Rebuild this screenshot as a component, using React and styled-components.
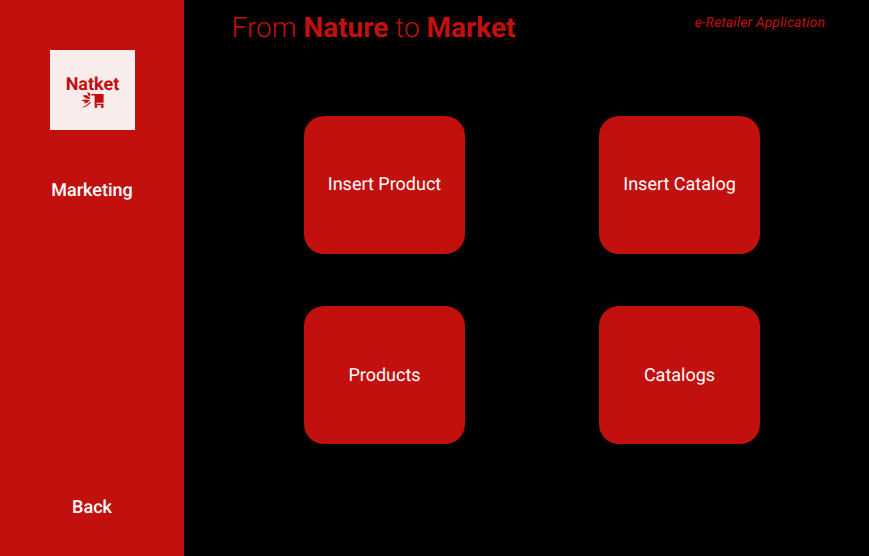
import React from "react";
import styled, { createGlobalStyle } from "styled-components";

const Global = createGlobalStyle`
  html, body { margin: 0; padding: 0; background: #000; }
  body { font-family: Roboto, "Liberation Sans", sans-serif; text-rendering: geometricPrecision; }
`;
const RED = "#c1100e";

const Page = styled.div`
  width: 869px;
  height: 556px;
  display: flex;
  background: #000;
  overflow: hidden;
`;
const Sidebar = styled.aside`
  width: 184px;
  flex: none;
  background: ${RED};
  display: flex;
  flex-direction: column;
  align-items: center;
  padding: 50px 0 38px;
  box-sizing: border-box;
`;
const Logo = styled.div`
  width: 85px;
  height: 80px;
  background: #f8eced;
  display: flex;
  flex-direction: column;
  align-items: center;
  justify-content: flex-start;
  padding-top: 24px;
  box-sizing: border-box;
  margin-left: 1px;
  color: ${RED};
`;
const LogoName = styled.div`
  font-size: 18px;
  font-weight: 700;
  line-height: 21px;
`;
const MarkSvg = styled.svg`
  display: block;
  margin: -3px 2px 0 0;
`;
const SideLabel = styled.div`
  color: #fff;
  font-size: 18px;
  font-weight: 500;
  line-height: 21px;
  margin-top: ${(p) => (p.$push ? "auto" : `${p.$top || 0}px`)};
`;
const Main = styled.main`
  flex: 1;
  display: flex;
  flex-direction: column;
`;
const Header = styled.header`
  display: flex;
  justify-content: space-between;
  align-items: flex-start;
  padding: 11px 44px 0 47.5px;
  height: 116px;
  box-sizing: border-box;
`;
const Title = styled.h1`
  margin: 0;
  color: ${RED};
  font-size: 28px;
  line-height: 33px;
  font-weight: 300;
  b { font-weight: 700; }
`;
const Tagline = styled.div`
  color: ${RED};
  font-size: 14px;
  font-style: italic;
  font-weight: 400;
  line-height: 16px;
  margin-top: 4px;
  letter-spacing: 0.1px;
`;
const Grid = styled.div`
  display: grid;
  grid-template-columns: repeat(2, 161px);
  grid-auto-rows: 138px;
  column-gap: 134px;
  row-gap: 52px;
  padding-left: 120px;
`;
const Tile = styled.div`
  background: ${RED};
  border-radius: 20px;
  color: #fff;
  font-size: 18px;
  line-height: 21px;
  display: flex;
  align-items: center;
  justify-content: center;
  padding-bottom: ${(p) => (p.$low ? 0 : 2)}px;
  box-sizing: border-box;
`;

const LogoMark = () => (
  <MarkSvg width="24" height="16" viewBox="0 0 24 16" fill="currentColor" aria-hidden="true">
    <path d="M0.8 15.6 C4.5 14.8 7.5 12.8 10.2 9.6 L10.9 10.4 C8.2 13.6 5 15.8 0.8 15.6Z" />
    <path d="M7.2 0.2 L10 1 L10.4 4.8 L8.4 3.4 Z" />
    <path d="M2.8 3.4 L6.4 3 L9.6 5.2 L10.4 7 L6.8 6.6 L4.6 5.4 Z" />
    <path d="M1 8.6 L5 7.6 L10 8 L7.4 10.8 L3.6 11.6 L5.2 9.8 Z" />
    <path d="M11.2 2 H23.6 V10.8 H16.4 V11.8 H23.6 V13.2 H14.6 V3.6 H11.2 Z" />
    <rect x="14.6" y="13.2" width="2.6" height="2.6" />
    <rect x="21" y="13.2" width="2.6" height="2.6" />
  </MarkSvg>
);

export default function App() {
  return (
    <Page>
      <Global />
      <Sidebar>
        <Logo>
          <LogoName>Natket</LogoName>
          <LogoMark />
        </Logo>
        <SideLabel $top={50}>Marketing</SideLabel>
        <SideLabel $push>Back</SideLabel>
      </Sidebar>
      <Main>
        <Header>
          <Title>
            From <b>Nature</b> to <b>Market</b>
          </Title>
          <Tagline>e-Retailer Application</Tagline>
        </Header>
        <Grid>
          <Tile>Insert Product</Tile>
          <Tile>Insert Catalog</Tile>
          <Tile $low>Products</Tile>
          <Tile $low>Catalogs</Tile>
        </Grid>
      </Main>
    </Page>
  );
}
